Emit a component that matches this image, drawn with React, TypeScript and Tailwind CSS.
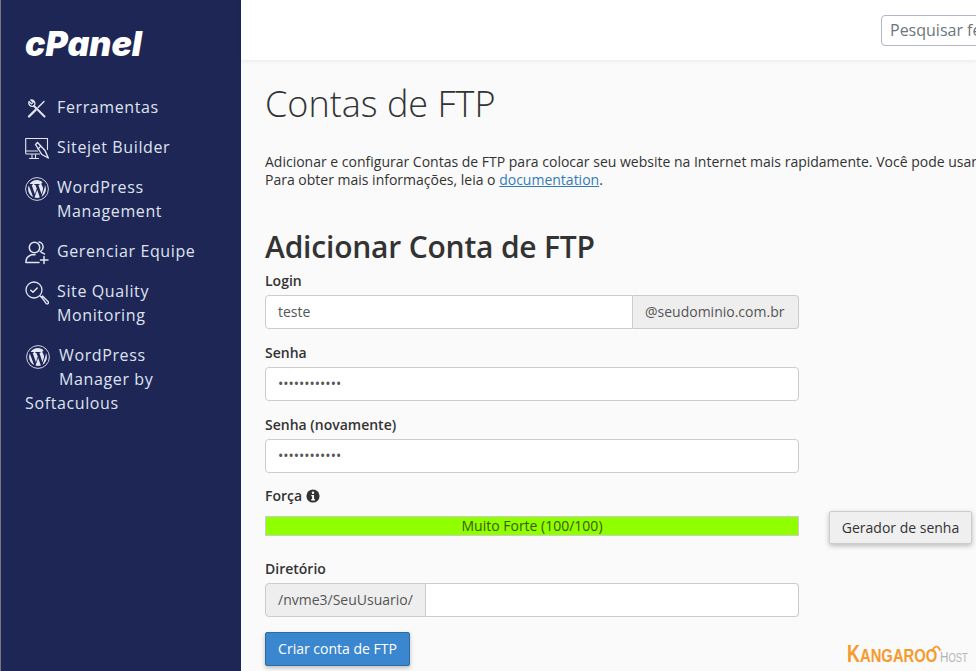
import React from "react";

const iconBox = "w-[24px] h-[24px] shrink-0 mt-[2px] -mb-[2px]";

const Wp = () => (
  <svg viewBox="0 0 24 24" className={iconBox} fill="none">
    <circle cx="12" cy="12" r="11.4" stroke="#e4e7f2" strokeWidth="0.9" />
    <path fill="#e4e7f2" d="M3.1 12c0 3.5 2 6.6 5 8L3.8 8.4C3.3 9.5 3.1 10.7 3.1 12zm14.9-.5c0-1.1-.4-1.9-.7-2.4-.5-.7-.9-1.3-.9-2 0-.8.6-1.5 1.4-1.5h.1C16.300 4.100 14.200 3.100 12 3.100c-3.100 0-5.800 1.600-7.400 4h.6c.9 0 2.400-.1 2.400-.1.500 0 .5.700.1.800 0 0-.5.100-1 .1l3.200 9.400 1.900-5.700-1.400-3.700c-.5 0-.9-.1-.9-.1-.5 0-.4-.8.100-.8 0 0 1.500.1 2.300.1.900 0 2.400-.1 2.400-.1.500 0 .5.700.1.800 0 0-.5.100-1 .1l3.100 9.400.9-2.900c.4-1.200.6-2 .6-2.800zM12.200 12.800l-2.700 7.700c.8.200 1.600.4 2.500.4 1 0 2-.2 2.900-.5l-.1-.1-2.600-7.500zm7.600-5c0 .300.100.600.100.900 0 .9-.2 1.900-.7 3.200l-2.700 7.900c2.700-1.500 4.400-4.400 4.400-7.800 0-1.600-.4-3-1.100-4.200z" />
  </svg>
);

const Tools = () => (
  <svg viewBox="0 0 24 24" className={iconBox} fill="none" stroke="#e4e7f2" strokeLinecap="round" strokeLinejoin="round">
    <path d="M19.500 19.500 9 9" strokeWidth="2" />
    <path d="M9 9a3.600 3.600 0 0 1-5-4.500l2.500 2.400 1.700-1.700L5.800 3A3.600 3.600 0 0 1 9 9z" strokeWidth="1.300" />
    <path d="M19 4.500 13 10.500" strokeWidth="1.400" />
    <path d="M10.500 13 4 19.500" strokeWidth="2.400" />
  </svg>
);

const Monitor = () => (
  <svg viewBox="0 0 24 24" className={iconBox} fill="none" stroke="#e4e7f2" strokeWidth="1.100" strokeLinejoin="round" strokeLinecap="round">
    <path d="M14.500 17H1.500a.8.800 0 0 1-.8-.8V1.500h21.800v11" />
    <path d="M1 14h11.500" />
    <path d="M10.500 17.500v3.300M7 17.500v3.300M4.500 21.500h9" />
    <path d="M10.500 7.500l2-2 7.500 8 3.300 7.500-6.500-3.500z" strokeWidth="1.400" />
    <path d="M13 12l2.500-2.500" />
  </svg>
);

const Team = () => (
  <svg viewBox="0 0 24 24" className={iconBox} fill="none" stroke="#e4e7f2" strokeWidth="1.500" strokeLinecap="round" strokeLinejoin="round">
    <circle cx="9.500" cy="6.500" r="5.200" />
    <path d="M14 1c2.800.5 4.500 3 4 6-.3 1.700-1.300 2.800-2.700 3.600M16.500 11.500c1 .3 2 .8 3 1.500" />
    <path d="M1 21c0-3 1-5 3.500-6.200l2-1h3.500" />
    <path d="M1 21.500h13" />
    <path d="M19 15.500v7M15.500 19h7.500" />
  </svg>
);

const Quality = () => (
  <svg viewBox="0 0 24 24" className={iconBox} fill="none" stroke="#e4e7f2" strokeWidth="1.300" strokeLinecap="round" strokeLinejoin="round">
    <circle cx="9" cy="9" r="8" />
    <path d="M5.800 9.200l2.200 2 4.200-4.200" strokeWidth="1.500" />
    <path d="M15 15l2 1.700" />
    <path d="M16.500 16l1-1 5.500 5.500c.7.700.6 1.500.1 2-.5.500-1.300.5-2-.1z" />
  </svg>
);

function NavRow({ icon, children }: { icon: React.ReactNode; children: React.ReactNode }) {
  return (
    <div className="flex items-start gap-[8px] text-[#dfe3f0] text-[16px] leading-[24px] tracking-[0.62px] mb-[16px]">
      {icon}
      <div>{children}</div>
    </div>
  );
}

function Label({ children }: { children: React.ReactNode }) {
  return <div className="text-[14px] leading-[20px] font-semibold text-[#333] mb-[4px]">{children}</div>;
}

function Field({ value }: { value?: string }) {
  return (
    <div className="w-[534px] h-[34px] bg-white border border-[#ccc] rounded-[4px] px-[12px] pb-[2px] flex items-center text-[14px] text-[#555]">
      {value}
    </div>
  );
}

export default function App() {
  return (
    <div className="w-[976px] h-[671px] overflow-hidden flex bg-[#fafafa] font-['Open_Sans',sans-serif]">
      <aside className="w-[241px] shrink-0 bg-[#1e2655] border-l border-l-[#777] pl-[24px] pt-[26px]">
        <div className="h-[36px] font-black italic text-white text-[34px] leading-[36px] font-['Inter',sans-serif] mb-[33px]">cPanel</div>
        <NavRow icon={<Tools />}>Ferramentas</NavRow>
        <NavRow icon={<Monitor />}>Sitejet Builder</NavRow>
        <NavRow icon={<Wp />}>
          WordPress
          <br />
          Management
        </NavRow>
        <NavRow icon={<Team />}>Gerenciar Equipe</NavRow>
        <NavRow icon={<Quality />}>
          Site Quality
          <br />
          Monitoring
        </NavRow>
        <div className="text-[#dfe3f0] text-[16px] leading-[24px] tracking-[0.62px]">
          <div className="flex items-start gap-[9px] pl-[1px]">
            <Wp />
            <div>
              WordPress
              <br />
              Manager by
            </div>
          </div>
          Softaculous
        </div>
      </aside>

      <main className="flex-1 min-w-0 relative">
        <header className="h-[60px] bg-white shadow-[0_1px_4px_rgba(0,0,0,0.08)] flex items-start pt-[15px] pl-[640px]">
          <div className="w-[200px] shrink-0 h-[31px] border border-[#b5b5c8] rounded-[4px] pl-[8px] text-[16px] leading-[29px] text-[#6c757d] whitespace-nowrap">
            Pesquisar ferramentas
          </div>
        </header>

        <div className="pl-[24px] w-[760px]">
          <h1 className="mt-[22px] text-[36px] leading-[43px] font-light text-[#333]">Contas de FTP</h1>
          <p className="mt-[28px] text-[14px] leading-[18px] text-[#333] whitespace-nowrap">
            Adicionar e configurar Contas de FTP para colocar seu website na Internet mais rapidamente. Você pode usar um cliente de FTP.
            <br />
            Para obter mais informações, leia o <span className="text-[#337ab7] underline">documentation</span>.
          </p>
          <h2 className="mt-[40px] text-[30px] leading-[36px] font-semibold tracking-[-0.2px] text-[#333] mb-[6px]">Adicionar Conta de FTP</h2>

          <Label>Login</Label>
          <div className="flex w-[534px] h-[34px] mb-[14px]">
            <div className="flex-1 bg-white border border-[#ccc] rounded-l-[4px] px-[12px] pb-[2px] flex items-center text-[14px] text-[#555]">teste</div>
            <div className="w-[166px] bg-[#eee] border border-l-0 border-[#ccc] rounded-r-[4px] flex items-center pl-[12px] pb-[2px] text-[14px] text-[#555]">@seudominio.com.br</div>
          </div>

          <Label>Senha</Label>
          <div className="mb-[14px]"><Field value="••••••••••••" /></div>

          <Label>Senha (novamente)</Label>
          <div className="mb-[13px]"><Field value="••••••••••••" /></div>

          <div className="flex items-center gap-[4px] text-[14px] leading-[20px] font-semibold text-[#333] mb-[10px]">
            Força
            <svg viewBox="0 0 16 16" className="w-[14px] h-[14px]">
              <circle cx="8" cy="8" r="7.500" fill="#333" />
              <circle cx="8" cy="4.300" r="1.400" fill="#fafafa" />
              <path d="M6 6.800h3.200v4.700h1V13H6v-1.500h1V8.300H6z" fill="#fafafa" />
            </svg>
          </div>

          <div className="flex items-start mb-[23px] h-[20px]">
            <div className="w-[534px] h-[20px] bg-[#90ff00] border border-[#ccc] text-center text-[14px] leading-[18px] text-[#3c5a12] shrink-0">
              Muito Forte (100/100)
            </div>
            <div className="ml-[30px] -mt-[5px] w-[143px] h-[33px] shrink-0 bg-[#efefef] border border-[#ccc] rounded-[2px] shadow-[0_2px_5px_rgba(0,0,0,0.25)] flex items-center justify-center text-[14px] text-[#333]">
              Gerador de senha
            </div>
          </div>

          <Label>Diretório</Label>
          <div className="flex w-[534px] h-[34px] mb-[15px]">
            <div className="w-[161px] bg-[#eee] border border-[#ccc] rounded-l-[4px] flex items-center pl-[12px] pb-[2px] text-[14px] text-[#555]">/nvme3/SeuUsuario/</div>
            <div className="flex-1 bg-white border border-l-0 border-[#ccc] rounded-r-[4px]" />
          </div>

          <div className="w-[145px] h-[34px] bg-[#3a87cf] border border-[#2e6da4] rounded-[2px] pb-[2px] shadow-[0_2px_4px_rgba(0,0,0,0.25)] flex items-center justify-center text-[14px] text-white">
            Criar conta de FTP
          </div>
        </div>

        <div className="absolute left-[606px] top-[641px] h-[26px] w-[125px] flex items-baseline whitespace-nowrap font-['Liberation_Sans',sans-serif] leading-[26px]">
          <span className="text-[#f79a2e] font-bold text-[23px] scale-x-[0.78] origin-left inline-block w-[93px] shrink-0">K<span className="text-[19px]">ANGAROO</span></span>
          <span className="text-[#b5b5b5] text-[15px] scale-x-[0.78] origin-left inline-block shrink-0">H<span className="text-[12px]">OST</span></span>
          <svg viewBox="0 0 12 10" className="absolute left-[83px] top-[3px] w-[12px] h-[10px]" fill="none" stroke="#f79a2e" strokeWidth="1.800" strokeLinecap="round">
            <path d="M2 7C4 3 6 2 8 3l2 3" />
          </svg>
        </div>
      </main>
    </div>
  );
}
